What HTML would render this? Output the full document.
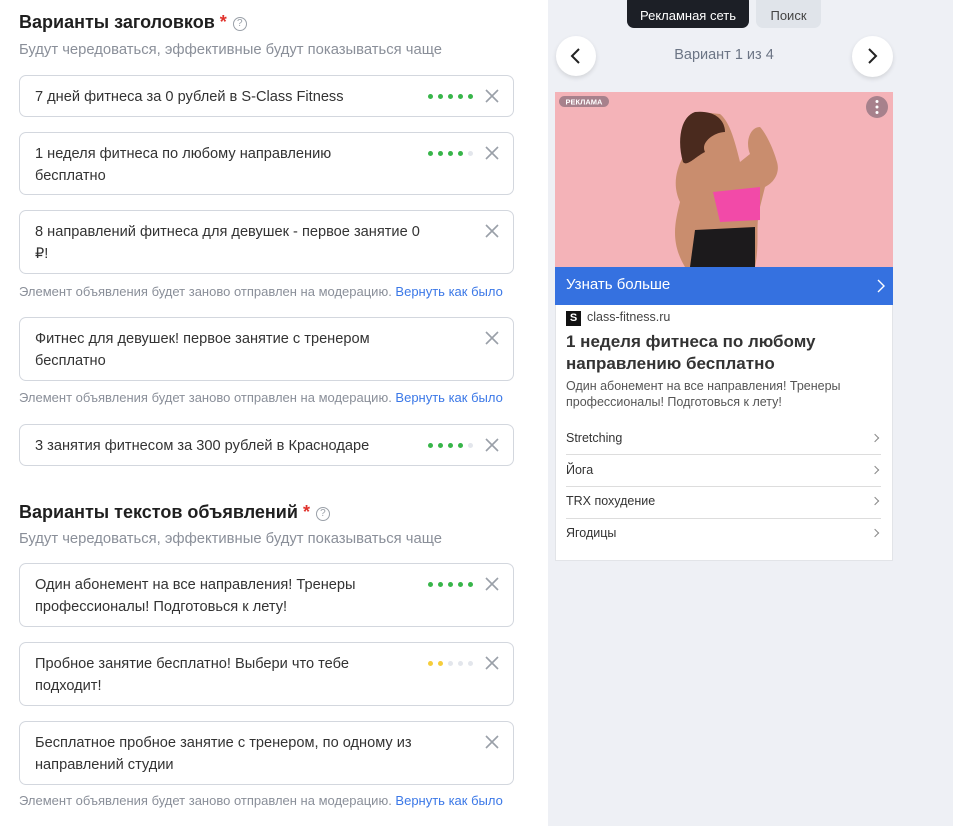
<!DOCTYPE html>
<html><head><meta charset="utf-8"><style>
*{margin:0;padding:0;box-sizing:border-box}
body{width:953px;height:826px;background:#fff;font-family:"Liberation Sans",sans-serif;position:relative;overflow:hidden;color:#222}
.a{position:absolute}
h2{position:absolute;left:19px;font-size:18px;font-weight:bold;color:#1f1f1f}
h2 .st{color:#e0312b}
.q{display:inline-block;width:14px;height:14px;border:1.5px solid #9aa0a8;border-radius:50%;font-size:10px;color:#9aa0a8;text-align:center;line-height:11px;vertical-align:2px;margin-left:6px;font-weight:normal}
.sub{position:absolute;left:19px;font-size:14.8px;color:#8a8f99}
.box{position:absolute;left:19px;width:495px;border:1px solid #d3d7de;border-radius:7px;padding:10px 40px 0 15px;font-size:14.6px;line-height:22px;color:#333;white-space:nowrap}
.dots{position:absolute;right:40px;top:18px;display:flex;gap:5px}
.dots i{width:5px;height:5px;border-radius:50%;background:#38b54a;display:block}
.dots i.g{background:#e3e6ec}.dots i.y{background:#f5cd3c}
.x{position:absolute;right:14px;top:13px;width:14px;height:14px}
.note{position:absolute;left:19px;font-size:13px;color:#8a8f99}
.note span{color:#3b78e7}
.li{position:absolute;left:566px;width:316px;font-size:12.5px;color:#333;height:32px;line-height:32px}
.li:after{content:"";position:absolute;right:4px;top:13px;width:5px;height:5px;border-right:1px solid #888;border-top:1px solid #888;transform:rotate(45deg)}
.sep{position:absolute;left:566px;width:315px;height:1px;background:#ddd}
</style></head><body>
<h2 style="top:12px">Варианты заголовков <span class="st">*</span><span class="q">?</span></h2>
<div class="sub" style="top:42px">Будут чередоваться, эффективные будут показываться чаще</div>

<div class="box" style="top:75px;height:42px">7 дней фитнеса за 0 рублей в S-Class Fitness<div class="dots"><i></i><i></i><i></i><i></i><i></i></div><svg class="x" viewBox="0 0 14 14"><path d="M1 1L13 13M13 1L1 13" stroke="#9aa0a8" stroke-width="1.6"/></svg></div>
<div class="box" style="top:132px;height:63px">1 неделя фитнеса по любому направлению<br>бесплатно<div class="dots"><i></i><i></i><i></i><i></i><i class="g"></i></div><svg class="x" viewBox="0 0 14 14"><path d="M1 1L13 13M13 1L1 13" stroke="#9aa0a8" stroke-width="1.6"/></svg></div>
<div class="box" style="top:210px;height:64px">8 направлений фитнеса для девушек - первое занятие 0<br>₽!<svg class="x" viewBox="0 0 14 14"><path d="M1 1L13 13M13 1L1 13" stroke="#9aa0a8" stroke-width="1.6"/></svg></div>
<div class="note" style="top:284px">Элемент объявления будет заново отправлен на модерацию. <span>Вернуть как было</span></div>
<div class="box" style="top:317px;height:64px">Фитнес для девушек! первое занятие с тренером<br>бесплатно<svg class="x" viewBox="0 0 14 14"><path d="M1 1L13 13M13 1L1 13" stroke="#9aa0a8" stroke-width="1.6"/></svg></div>
<div class="note" style="top:390px">Элемент объявления будет заново отправлен на модерацию. <span>Вернуть как было</span></div>
<div class="box" style="top:424px;height:42px">3 занятия фитнесом за 300 рублей в Краснодаре<div class="dots"><i></i><i></i><i></i><i></i><i class="g"></i></div><svg class="x" viewBox="0 0 14 14"><path d="M1 1L13 13M13 1L1 13" stroke="#9aa0a8" stroke-width="1.6"/></svg></div>

<h2 style="top:502px">Варианты текстов объявлений <span class="st">*</span><span class="q">?</span></h2>
<div class="sub" style="top:531px">Будут чередоваться, эффективные будут показываться чаще</div>
<div class="box" style="top:563px;height:64px">Один абонемент на все направления! Тренеры<br>профессионалы! Подготовься к лету!<div class="dots"><i></i><i></i><i></i><i></i><i></i></div><svg class="x" viewBox="0 0 14 14"><path d="M1 1L13 13M13 1L1 13" stroke="#9aa0a8" stroke-width="1.6"/></svg></div>
<div class="box" style="top:642px;height:64px">Пробное занятие бесплатно! Выбери что тебе<br>подходит!<div class="dots"><i class="y"></i><i class="y"></i><i class="g"></i><i class="g"></i><i class="g"></i></div><svg class="x" viewBox="0 0 14 14"><path d="M1 1L13 13M13 1L1 13" stroke="#9aa0a8" stroke-width="1.6"/></svg></div>
<div class="box" style="top:721px;height:64px">Бесплатное пробное занятие с тренером, по одному из<br>направлений студии<svg class="x" viewBox="0 0 14 14"><path d="M1 1L13 13M13 1L1 13" stroke="#9aa0a8" stroke-width="1.6"/></svg></div>
<div class="note" style="top:793px">Элемент объявления будет заново отправлен на модерацию. <span>Вернуть как было</span></div>

<div class="a" style="left:548px;top:0;width:405px;height:826px;background:#eef0f5"></div>
<div class="a" style="left:627px;top:-6px;width:122px;height:34px;background:#1c1f26;border-radius:7px;color:#fff;font-size:13px;text-align:center;line-height:44px">Рекламная сеть</div>
<div class="a" style="left:756px;top:-6px;width:65px;height:34px;background:#e0e4ea;border-radius:7px;color:#444;font-size:13px;text-align:center;line-height:44px">Поиск</div>
<div class="a" style="left:556px;top:36px;width:40px;height:40px;border-radius:50%;background:#fff;box-shadow:0 2px 5px rgba(0,0,0,.12)"><svg width="40" height="40"><path d="M23 13L16 20L23 27" fill="none" stroke="#222" stroke-width="2"/></svg></div>
<div class="a" style="left:852px;top:36px;width:41px;height:41px;border-radius:50%;background:#fff;box-shadow:0 2px 5px rgba(0,0,0,.12)"><svg width="41" height="41"><path d="M17 13L24 20L17 27" fill="none" stroke="#222" stroke-width="2"/></svg></div>
<div class="a" style="left:600px;top:47px;width:248px;text-align:center;font-size:14.5px;color:#6c7585">Вариант 1 из 4</div>

<div class="a" style="left:555px;top:92px;width:338px;height:469px;background:#fff;border:1px solid #e2e4e8"></div>
<svg class="a" style="left:555px;top:92px" width="338" height="175" viewBox="0 0 338 175">
<rect width="338" height="175" fill="#f4b3b8"/>
<path d="M145 20C130 25 125 45 128 65C120 80 118 95 125 110C120 130 115 150 130 175L200 175C205 150 200 135 205 115L210 95C220 90 225 80 222 70C218 55 210 40 205 35C195 35 190 50 195 62L185 70C180 50 175 30 165 22Z" fill="#c98d6e"/>
<path d="M140 20C125 25 122 50 128 70C132 75 140 65 150 60C145 50 160 40 170 40C170 28 160 18 140 20Z" fill="#4a2a1e"/>
<path d="M158 100L205 95L205 128L165 130Z" fill="#f24aa8"/>
<path d="M140 138L200 135L200 175L135 175Z" fill="#1c1a1c"/>
<rect x="4" y="4" width="50" height="11" rx="5.5" fill="#a7818c"/>
<text x="29" y="12.5" font-size="7.5" font-weight="bold" fill="#fff" text-anchor="middle" font-family="Liberation Sans">РЕКЛАМА</text>
<circle cx="322" cy="15" r="11" fill="#a7818c"/>
<circle cx="322" cy="9.5" r="1.5" fill="#fff"/><circle cx="322" cy="15" r="1.5" fill="#fff"/><circle cx="322" cy="20.5" r="1.5" fill="#fff"/>
</svg>
<div class="a" style="left:555px;top:267px;width:338px;height:38px;background:#3571e0;color:#fff;font-size:15px;line-height:36px;padding-left:11px">Узнать больше<svg class="a" style="right:8px;top:12px" width="8" height="14"><path d="M1 1L7 7L1 13" fill="none" stroke="#fff" stroke-width="1.4"/></svg></div>
<div class="a" style="left:566px;top:311px;width:15px;height:15px;background:#111;color:#fff;font-size:11px;font-weight:bold;text-align:center;line-height:15px">S</div>
<div class="a" style="left:587px;top:310px;font-size:12.5px;color:#444">class-fitness.ru</div>
<div class="a" style="left:566px;top:331px;width:320px;font-size:17px;font-weight:bold;line-height:22px;color:#333">1 неделя фитнеса по любому направлению бесплатно</div>
<div class="a" style="left:566px;top:378px;width:320px;font-size:12.5px;line-height:16px;color:#555">Один абонемент на все направления! Тренеры профессионалы! Подготовься к лету!</div>
<div class="li" style="top:422px">Stretching</div><div class="sep" style="top:454px"></div>
<div class="li" style="top:454px">Йога</div><div class="sep" style="top:486px"></div>
<div class="li" style="top:485px">TRX похудение</div><div class="sep" style="top:518px"></div>
<div class="li" style="top:517px">Ягодицы</div>
</body></html>
